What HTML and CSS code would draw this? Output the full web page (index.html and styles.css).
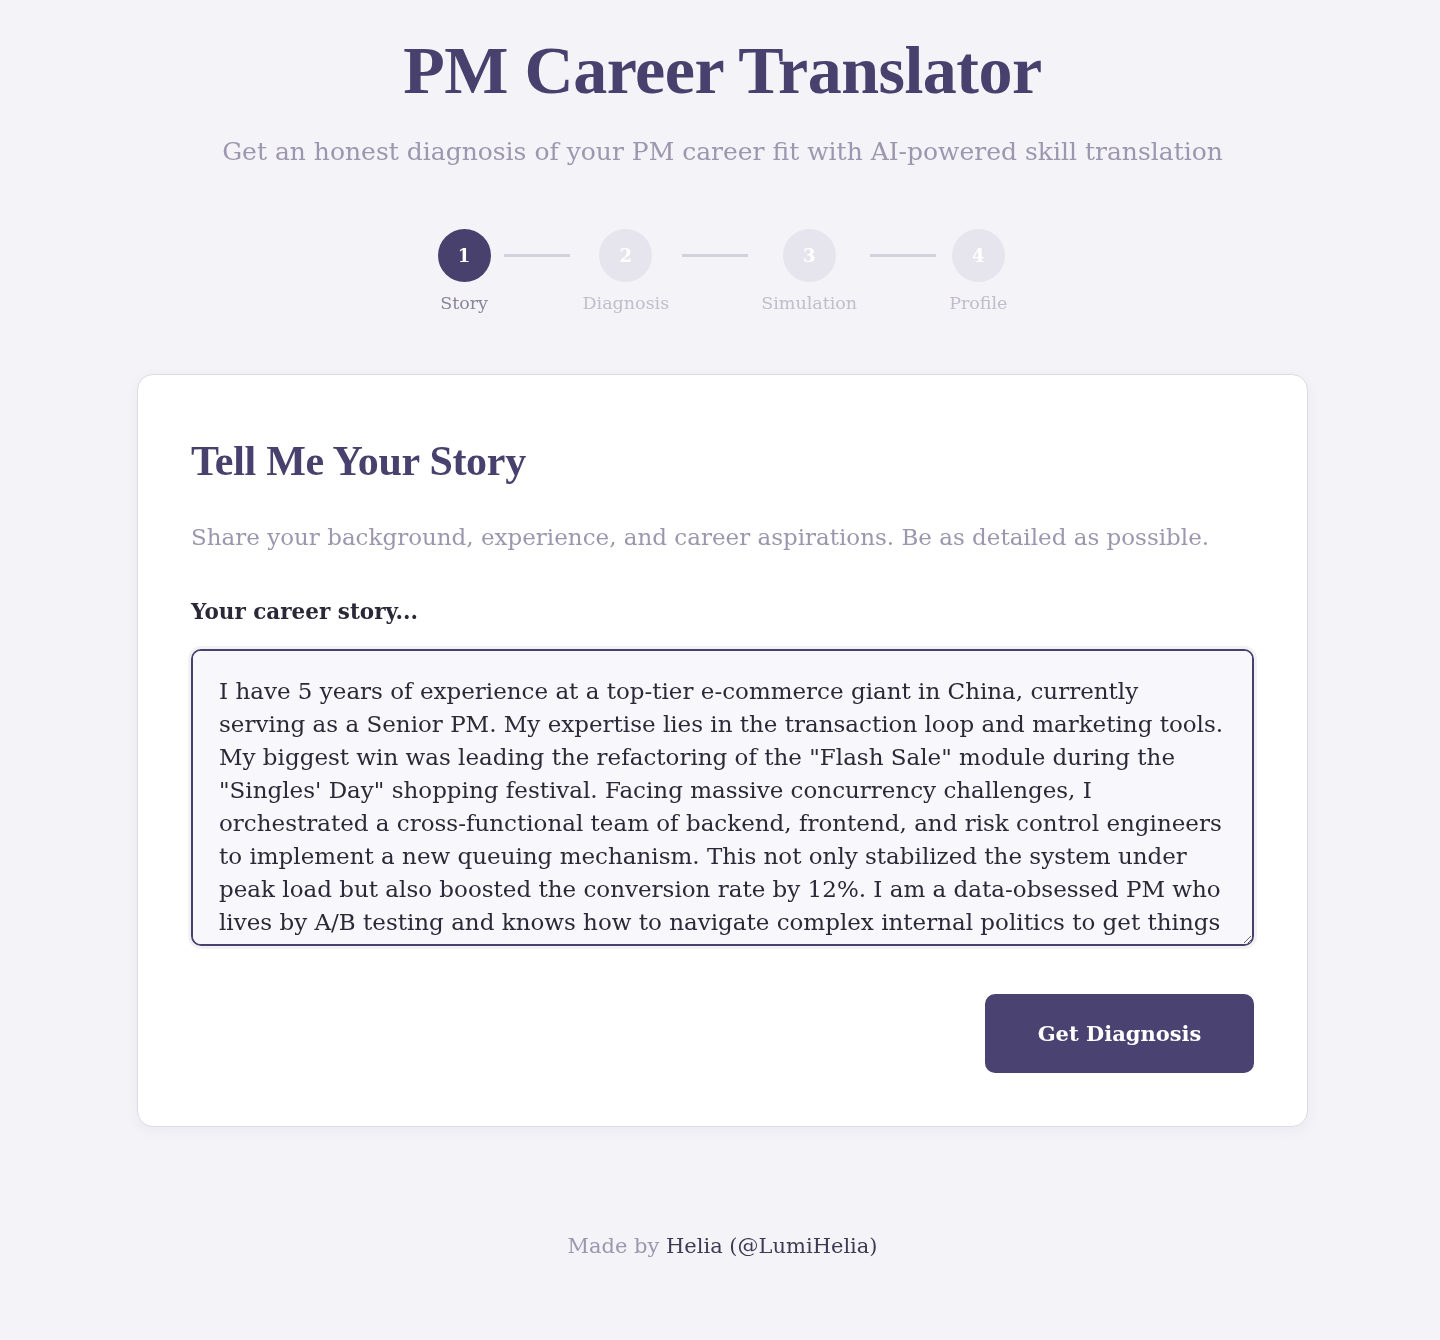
FILE: index.html
```html
<!DOCTYPE html>
<html lang="en">
<head>
  <meta charset="UTF-8" />
  <meta name="viewport" content="width=device-width, initial-scale=1.0" />
  <title>PM Career Translator</title>
  <link rel="stylesheet" href="styles.css">
</head>
<body>

  <header class="hero">
    <h1 class="hero-title">PM Career Translator</h1>
    <p class="hero-sub">Get an honest diagnosis of your PM career fit with AI-powered skill translation</p>
  </header>

  <div class="steps">
    <div class="step active">
      <div class="step-dot">1</div>
      <div class="step-label">Story</div>
    </div>
    <div class="step-line"></div>
    <div class="step">
      <div class="step-dot">2</div>
      <div class="step-label">Diagnosis</div>
    </div>
    <div class="step-line"></div>
    <div class="step">
      <div class="step-dot">3</div>
      <div class="step-label">Simulation</div>
    </div>
    <div class="step-line"></div>
    <div class="step">
      <div class="step-dot">4</div>
      <div class="step-label">Profile</div>
    </div>
  </div>

  <main class="card">
    <h2 class="card-title">Tell Me Your Story</h2>
    <p class="card-desc">Share your background, experience, and career aspirations. Be as detailed as possible.</p>

    <label class="field-label" for="story">Your career story...</label>
    <textarea id="story" class="story-input">I have 5 years of experience at a top-tier e-commerce giant in China, currently serving as a Senior PM. My expertise lies in the transaction loop and marketing tools. My biggest win was leading the refactoring of the "Flash Sale" module during the "Singles' Day" shopping festival. Facing massive concurrency challenges, I orchestrated a cross-functional team of backend, frontend, and risk control engineers to implement a new queuing mechanism. This not only stabilized the system under peak load but also boosted the conversion rate by 12%. I am a data-obsessed PM who lives by A/B testing and knows how to navigate complex internal politics to get things done.</textarea>

    <div class="actions">
      <button class="btn-primary">Get Diagnosis</button>
    </div>
  </main>

  <footer class="footer">
    Made by <span class="author">Helia (@LumiHelia)</span>
  </footer>

</body>
</html>
```

FILE: styles.css
```css
* { margin: 0; padding: 0; box-sizing: border-box; }
:root {
  --purple: #48406d;
  --muted: #9c97ae;
  --bg: #f4f3f8;
}
body {
  font-family: "DejaVu Serif", "Liberation Serif", serif;
  background: var(--bg);
  color: #2b2937;
  padding: 30px 0 70px 5px;
}
.hero {
  text-align: center;
}
.hero-title {
  font-family: "Liberation Serif", "Times New Roman", serif;
  font-size: 68px;
  font-weight: bold;
  color: var(--purple);
  letter-spacing: -0.5px;
  line-height: 80px;
}
.hero-sub {
  font-size: 25px;
  line-height: 36px;
  color: var(--muted);
  margin-top: 24px;
}
.steps {
  display: flex;
  justify-content: center;
  gap: 13px;
  margin-top: 59px;
}
.step {
  display: flex;
  flex-direction: column;
  align-items: center;
}
.step-dot {
  width: 53px;
  height: 53px;
  border-radius: 50%;
  background: #e6e4ec;
  color: #fff;
  font-weight: bold;
  font-size: 18px;
  display: flex;
  align-items: center;
  justify-content: center;
}
.step-label {
  font-size: 17.5px;
  line-height: 24px;
  color: #c1bdcb;
  margin-top: 9px;
}
.step.active .step-dot {
  background: var(--purple);
}
.step.active .step-label {
  color: #8a8599;
}
.step-line {
  width: 66px;
  height: 3px;
  background: #d3d1db;
  margin-top: 25px;
}
.card {
  max-width: 1171px;
  margin: 59px auto 0;
  background: #fff;
  border: 1px solid #dddbe4;
  border-radius: 16px;
  box-shadow: 0 4px 14px rgba(60, 50, 100, 0.05);
  padding: 60px 53px 53px;
}
.card-title {
  font-family: "Liberation Serif", "Times New Roman", serif;
  font-size: 42px;
  font-weight: bold;
  color: var(--purple);
  line-height: 52px;
  letter-spacing: -0.3px;
}
.card-desc {
  font-size: 23px;
  line-height: 36px;
  color: var(--muted);
  margin-top: 32px;
}
.field-label {
  display: block;
  font-size: 21.5px;
  line-height: 30px;
  font-weight: bold;
  color: #2a2836;
  margin-top: 42px;
  margin-bottom: 22px;
}
.story-input {
  display: block;
  width: 100%;
  height: 297px;
  font-family: "DejaVu Serif", "Liberation Serif", serif;
  font-size: 23px;
  line-height: 33px;
  color: #2b2937;
  background: #f8f7fb;
  border: 2px solid var(--purple);
  border-radius: 10px;
  box-shadow: 0 0 0 3px rgba(72, 64, 109, 0.07);
  padding: 24px 26px;
  outline: none;
  resize: vertical;
}
.actions {
  display: flex;
  justify-content: flex-end;
  margin-top: 48px;
}
.btn-primary {
  width: 269px;
  height: 79px;
  border: none;
  border-radius: 10px;
  background: #4a4270;
  color: #fff;
  font-family: "DejaVu Serif", "Liberation Serif", serif;
  font-size: 21px;
  font-weight: bold;
  cursor: pointer;
}
.footer {
  text-align: center;
  font-size: 21px;
  line-height: 30px;
  color: var(--muted);
  margin-top: 104px;
}
.author {
  color: #3e3a52;
}
```
